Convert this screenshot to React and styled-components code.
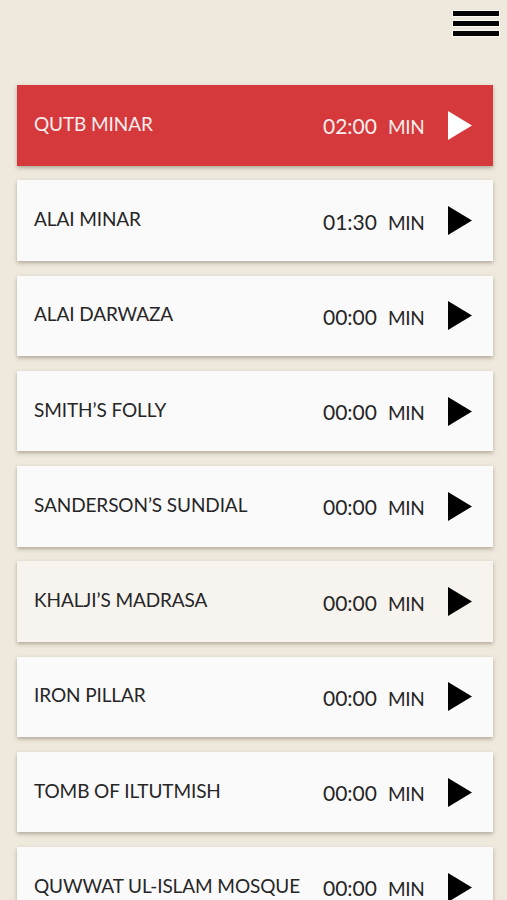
import React from 'react';
import styled, { createGlobalStyle } from 'styled-components';

const GlobalStyle = createGlobalStyle`
	body {
		margin: 0;
		background: #efe9dd;
		font-family: Lato, "Noto Sans", sans-serif;
	}
`;

const Page = styled.div`
	min-height: 900px;
	background: #efe9dd;
	overflow: hidden;
`;

const Header = styled.header`
	display: flex;
	justify-content: flex-end;
	height: 85px;
	padding: 11px 8px 0 0;
	box-sizing: border-box;
`;

const Burger = styled.div`
	display: flex;
	flex-direction: column;
	gap: 5px;
	width: 46px;
`;

const Bar = styled.span`
	display: block;
	height: 5px;
	background: #050505;
	box-shadow: 0 0 0 1px rgba(255, 255, 255, 0.7);
`;

const List = styled.ul`
	list-style: none;
	margin: 0;
	padding: 0 14px 0 17px;
	display: flex;
	flex-direction: column;
	gap: 14.75px;
`;

const Card = styled.li`
	display: flex;
	align-items: center;
	height: 80.5px;
	padding: 0 21px 0 17px;
	box-sizing: border-box;
	background: ${(p) => (p.$active ? '#d5393c' : p.$tint ? '#f7f4ef' : '#fbfafb')};
	color: ${(p) => (p.$active ? '#fbeeee' : '#262626')};
	box-shadow: 0 2px 4px rgba(60, 50, 30, 0.35);
`;

const Title = styled.span`
	flex: 1;
	font-size: 19px;
	letter-spacing: -0.1px;
	white-space: nowrap;
	padding-bottom: 4px;
`;

const Time = styled.span`
	display: flex;
	align-items: baseline;
	gap: 11px;
	width: 100px;
	white-space: nowrap;
	margin-right: 25px;
	padding-top: 1px;
`;

const Digits = styled.span`
	font-size: 21px;
`;

const Unit = styled.span`
	font-size: 19px;
	letter-spacing: -0.3px;
`;

const Play = ({ color }) => (
	<svg width='24' height='29' viewBox='0 0 24 29'>
		<polygon points='0,0 24,14.5 0,29' fill={color} />
	</svg>
);

const places = [
	{ name: 'QUTB MINAR', time: '02:00', active: true },
	{ name: 'ALAI MINAR', time: '01:30' },
	{ name: 'ALAI DARWAZA', time: '00:00' },
	{ name: 'SMITH’S FOLLY', time: '00:00' },
	{ name: 'SANDERSON’S SUNDIAL', time: '00:00' },
	{ name: 'KHALJI’S MADRASA', time: '00:00', tint: true },
	{ name: 'IRON PILLAR', time: '00:00' },
	{ name: 'TOMB OF ILTUTMISH', time: '00:00' },
	{ name: 'QUWWAT UL-ISLAM MOSQUE', time: '00:00' }
];

export default function App() {
	return (
		<Page>
			<GlobalStyle />
			<Header>
				<Burger>
					<Bar />
					<Bar />
					<Bar />
				</Burger>
			</Header>
			<List>
				{places.map((p) => (
					<Card key={p.name} $active={p.active} $tint={p.tint}>
						<Title>{p.name}</Title>
						<Time>
							<Digits>{p.time}</Digits>
							<Unit>MIN</Unit>
						</Time>
						<Play color={p.active ? '#ffffff' : '#000000'} />
					</Card>
				))}
			</List>
		</Page>
	);
}
